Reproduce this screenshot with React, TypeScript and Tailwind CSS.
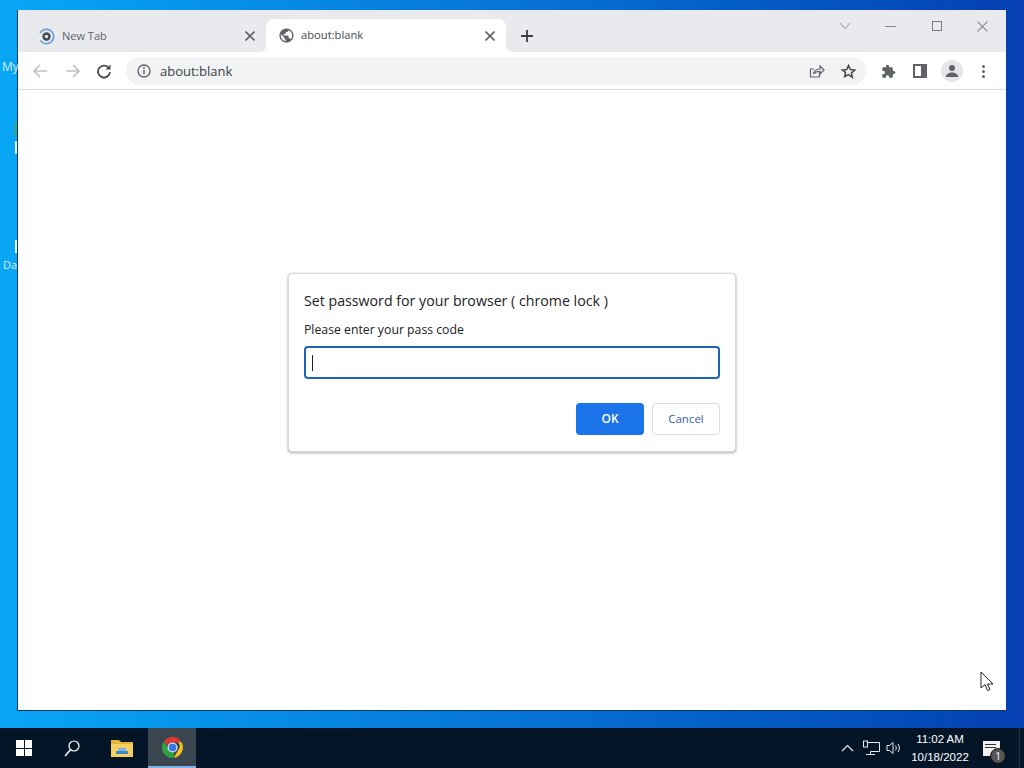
import React from "react";

const Sans = '[font-family:"Open_Sans","Noto_Sans",sans-serif]';

function ChromeLogo() {
  return (
    <svg width="25" height="25" viewBox="0 0 48 48">
      <path d="M24 4a20 20 0 0 1 17.3 10H24a10 10 0 0 0-9.3 6.3L7.9 11.8A20 20 0 0 1 24 4z" fill="#e0362c" />
      <path d="M41.3 14A20 20 0 0 1 26.5 43.8L35 29a10 10 0 0 0-.6-15z" fill="#f9c21b" />
      <path d="M7.9 11.8l8.6 14.9A10 10 0 0 0 27 33.6l-.5 10.2A20 20 0 0 1 7.9 11.8z" fill="#2f9e44" />
      <circle cx="24" cy="24" r="9.5" fill="#fff" />
      <circle cx="24" cy="24" r="7.5" fill="#3b78e7" />
    </svg>
  );
}

function X({ size = 10, color = "#5f6368", w = 1.6 }: { size?: number; color?: string; w?: number }) {
  return (
    <svg width={size} height={size} viewBox="0 0 10 10">
      <path d="M0.5 0.5l9 9M9.5 0.5l-9 9" stroke={color} strokeWidth={w} fill="none" />
    </svg>
  );
}

function TitleBar() {
  return (
    <div className="flex h-[42px] shrink-0 bg-[#e8eaed]">
      <div className="flex w-[248px] items-center pl-[20px] pr-[11px] pt-[10px]">
        <svg width="17" height="17" viewBox="0 0 18 18" className="shrink-0">
          <circle cx="9" cy="9" r="7.6" fill="none" stroke="#6ea2e0" strokeWidth="1.8" strokeDasharray="30 8" transform="rotate(-80 9 9)" />
          <circle cx="9" cy="9" r="4.4" fill="#3f4a55" />
          <circle cx="9" cy="9" r="1.9" fill="#dfe6ee" />
        </svg>
        <span className="ml-[7px] flex-1 text-[11px] text-[#5f6368]">New Tab</span>
        <X />
      </div>
      <div className="relative mt-[9px] flex h-[33px] w-[240px] items-center rounded-t-[8px] bg-white pl-[12px] pr-[11px]">
        <div className="absolute bottom-0 left-[-6px] h-[6px] w-[6px] bg-white">
          <div className="h-full w-full rounded-br-[6px] bg-[#e8eaed]" />
        </div>
        <div className="absolute bottom-0 right-[-6px] h-[6px] w-[6px] bg-white">
          <div className="h-full w-full rounded-bl-[6px] bg-[#e8eaed]" />
        </div>
        <svg width="17" height="17" viewBox="0 0 24 24" className="shrink-0">
          <path d="M12 2C6.480 2 2 6.480 2 12s4.480 10 10 10 10-4.480 10-10S17.520 2 12 2zm-1 17.930c-3.950-.49-7-3.850-7-7.930 0-.62.08-1.210.21-1.790L9 15v1c0 1.100.9 2 2 2v1.930zm6.900-2.540c-.26-.81-1-1.390-1.900-1.390h-1v-3c0-.55-.45-1-1-1H8v-2h2c.55 0 1-.45 1-1V7h2c1.100 0 2-.9 2-2v-.41c2.930 1.190 5 4.060 5 7.410 0 2.080-.8 3.970-2.100 5.390z" fill="#5f6368" />
        </svg>
        <span className="ml-[6px] flex-1 text-[11.2px] text-[#45484c]">about:blank</span>
        <X />
      </div>
      <div className="ml-[14px] flex items-center pt-[10px]">
        <svg width="14" height="14" viewBox="0 0 14 14">
          <path d="M7 1v12M1 7h12" stroke="#3c4043" strokeWidth="1.8" />
        </svg>
      </div>
      <div className="ml-auto flex w-[184px] items-start pt-[11px]">
        <div className="ml-[6px] flex w-[34px] justify-center pt-[1px]">
          <svg width="12" height="8" viewBox="0 0 12 8"><path d="M1 1l5 5.500L11 1" stroke="#b3b6ba" strokeWidth="1.200" fill="none" /></svg>
        </div>
        <div className="ml-[11px] flex h-[10px] w-[34px] items-center justify-center">
          <div className="h-px w-[11px] bg-[#83868a]" />
        </div>
        <div className="ml-[25px] flex w-[10px] justify-center">
          <div className="h-[10px] w-[10px] border border-[#7a7d80]" />
        </div>
        <div className="ml-[35px]"><X size={11} color="#85888b" w={1} /></div>
      </div>
    </div>
  );
}

function Toolbar() {
  return (
    <div className="flex h-[38px] shrink-0 items-center border-b border-[#dadce0] bg-white pt-[1px]">
      <div className="ml-[14px] flex w-[16px] justify-center">
        <svg width="16" height="16" viewBox="0 0 16 16"><path d="M15 8H2M8 2L2 8l6 6" stroke="#bdc1c6" strokeWidth="1.7" fill="none" /></svg>
      </div>
      <div className="ml-[17px] flex w-[16px] justify-center">
        <svg width="16" height="16" viewBox="0 0 16 16"><path d="M1 8h13M8 2l6 6-6 6" stroke="#bdc1c6" strokeWidth="1.7" fill="none" /></svg>
      </div>
      <div className="ml-[15px] flex w-[16px] justify-center">
        <svg width="16" height="16" viewBox="0 0 16 16">
          <path d="M13 5.200A6 6 0 1 0 14 9" stroke="#45494d" strokeWidth="1.800" fill="none" />
          <path d="M14.500 1.500v5h-5z" fill="#45494d" />
        </svg>
      </div>
      <div className="ml-[14px] flex h-[28px] w-[740px] items-center rounded-full bg-[#f1f3f4] pl-[11px]">
        <svg width="14" height="14" viewBox="0 0 14 14">
          <circle cx="7" cy="7" r="6" stroke="#5f6368" strokeWidth="1.300" fill="none" />
          <path d="M7 6v4.200" stroke="#5f6368" strokeWidth="1.400" />
          <circle cx="7" cy="4" r="0.9" fill="#5f6368" />
        </svg>
        <span className="ml-[9px] flex-1 pt-[1px] text-[13px] text-[#3c4043]">about:blank</span>
        <svg width="16" height="16" viewBox="0 0 16 16" className="mr-[16px]">
          <path d="M10.500 9.500V14H1.500V6H5" stroke="#5f6368" strokeWidth="1.200" fill="none" />
          <path d="M4.500 11c.5-3 3-5 6.500-5V3l4 4-4 4V8.300c-3 0-5 .8-6.500 2.700z" stroke="#5f6368" strokeWidth="1.200" fill="none" />
        </svg>
        <svg width="15" height="15" viewBox="0 0 24 24" className="mr-[10px]">
          <path d="M12 2.500l2.900 6.400 7 .8-5.200 4.700 1.400 6.900L12 17l-6.100 3.300 1.400-6.900L2.100 9.700l7-.8z" stroke="#45494d" strokeWidth="2.400" fill="none" />
        </svg>
      </div>
      <div className="ml-[14px] flex w-[16px] justify-center">
        <svg width="15" height="15" viewBox="0 0 24 24">
          <path d="M20.500 11H19V7a2 2 0 0 0-2-2h-4V3.500a2.500 2.500 0 0 0-5 0V5H4a2 2 0 0 0-2 2v3.800h1.500a2.700 2.700 0 0 1 0 5.400H2V20a2 2 0 0 0 2 2h3.800v-1.500a2.700 2.700 0 0 1 5.400 0V22H17a2 2 0 0 0 2-2v-4h1.500a2.500 2.500 0 0 0 0-5z" fill="#5f6368" />
        </svg>
      </div>
      <div className="ml-[17px] flex h-[14px] w-[14px] justify-end border-2 border-[#5f6368] bg-white">
        <div className="h-full w-[4px] bg-[#5f6368]" />
      </div>
      <div className="ml-[14px] flex h-[22px] w-[22px] items-center justify-center rounded-full bg-[#e3e5e8]">
        <svg width="14" height="14" viewBox="0 0 14 14">
          <circle cx="7" cy="4" r="3" fill="#5f6368" />
          <path d="M1 13c0-3 3-4.500 6-4.500s6 1.500 6 4.500z" fill="#5f6368" />
        </svg>
      </div>
      <div className="ml-[19px] flex flex-col gap-[2px]">
        <div className="h-[3px] w-[3px] rounded-full bg-[#5f6368]" />
        <div className="h-[3px] w-[3px] rounded-full bg-[#5f6368]" />
        <div className="h-[3px] w-[3px] rounded-full bg-[#5f6368]" />
      </div>
    </div>
  );
}

function Dialog() {
  return (
    <div className="ml-[270px] mt-[183px] flex h-[179px] w-[448px] flex-col rounded-[4px] border border-[#d8d8d8] bg-white px-[15px] pt-[17px] shadow-[0_1px_3px_rgba(0,0,0,0.35)]">
      <div className="whitespace-nowrap text-[14.2px] leading-[20px] text-[#202124]">Set password for your browser ( chrome lock )</div>
      <div className="mt-[10px] whitespace-nowrap text-[12.25px] leading-[18px] text-[#202124]">Please enter your pass code</div>
      <div className="mt-[7px] flex h-[33px] w-[416px] items-center rounded-[4px] border-2 border-[#1a65b8] pl-[6px]">
        <div className="h-[16px] w-px bg-[#202124]" />
      </div>
      <div className="mt-[24px] flex w-[416px] justify-end gap-[8px]">
        <div className="flex h-[32px] w-[68px] items-center justify-center rounded-[4px] bg-[#1a73e8] text-[12px] font-semibold text-white">OK</div>
        <div className="flex h-[32px] w-[68px] items-center justify-center rounded-[4px] border border-[#dadce0] bg-white text-[11.5px] text-[#3b5ea8]">Cancel</div>
      </div>
    </div>
  );
}

function Taskbar() {
  return (
    <div className="flex h-[40px] shrink-0 items-center bg-[#031526] text-white">
      <div className="ml-[16px] grid h-[16px] w-[16px] grid-cols-2 gap-[1px]">
        <div className="bg-white" /><div className="bg-white" /><div className="bg-white" /><div className="bg-white" />
      </div>
      <svg width="16" height="17" viewBox="0 0 16 17" className="ml-[32px]">
        <circle cx="10" cy="6" r="5" stroke="#fff" strokeWidth="1.200" fill="none" />
        <path d="M6.500 9.800L1 16" stroke="#fff" strokeWidth="1.500" />
      </svg>
      <svg width="22" height="18" viewBox="0 0 22 18" className="ml-[31px]">
        <path d="M0 1h8l2 2h12v3H0z" fill="#e8b53c" />
        <path d="M0 5h22v13H0z" fill="#f6cf62" />
        <path d="M5 12h12v3H5z" fill="#3f88c5" />
        <path d="M7 9h8v3H7z" fill="#7db6de" />
      </svg>
      <div className="ml-[15px] flex h-[40px] w-[48px] items-center justify-center border-b-2 border-[#7db3e6] bg-[#3a4650]">
        <ChromeLogo />
      </div>
      <div className="ml-auto flex items-center">
        <svg width="13" height="8" viewBox="0 0 13 8"><path d="M1 7l5.500-5.500L12 7" stroke="#e8eaed" strokeWidth="1.200" fill="none" /></svg>
        <svg width="17" height="16" viewBox="0 0 17 16" className="ml-[9px]">
          <path d="M4.500 2.500H16.500V11.500H7.500M7.500 11.500V14.500M3 14.500H12" stroke="#e8eaed" strokeWidth="1" fill="none" />
          <rect x="0.500" y="1" width="4" height="6" stroke="#e8eaed" fill="#031526" />
        </svg>
        <svg width="16" height="14" viewBox="0 0 16 14" className="ml-[6px]">
          <path d="M1 4.500h2.500L7 1.500v11L3.500 9.500H1z" stroke="#e8eaed" fill="none" />
          <path d="M9.500 4.500c1 1.500 1 3.500 0 5M12 3c1.800 2.500 1.800 5.500 0 8" stroke="#e8eaed" fill="none" />
        </svg>
        <div className="ml-[8px] flex w-[60px] flex-col items-center text-[11.5px] leading-[18px] [font-family:'Liberation_Sans',sans-serif]">
          <span className="whitespace-nowrap">11:02 AM</span>
          <span className="whitespace-nowrap">10/18/2022</span>
        </div>
        <div className="relative ml-[13px] mr-[19px] h-[15px] w-[17px] bg-[#f2f2f2] pl-[2px] pt-[3px]">
          <div className="h-px w-[11px] bg-[#333]" />
          <div className="mt-[2px] h-px w-[11px] bg-[#333]" />
          <div className="absolute left-[7px] top-[7px] flex h-[16px] w-[16px] items-center justify-center rounded-full border border-[#111] bg-[#555] text-[10px] leading-none text-white">1</div>
        </div>
        <div className="mr-[4px] h-[40px] w-px bg-[#24323e]" />
      </div>
    </div>
  );
}

export default function App() {
  return (
    <div className={`relative flex h-[768px] w-[1024px] flex-col overflow-hidden ${Sans}`}>
      <div className="relative flex h-[728px] shrink-0 bg-gradient-to-r from-[#09a6f6] via-[#0874d8] to-[#063fb2] pl-[17px] pt-[10px]">
        <span className="absolute left-[2px] top-[58px] text-[12px] text-[#d5f0ff]">My</span>
        <span className="absolute left-[3px] top-[257px] text-[11px] text-[#d5f0ff]">Da</span>
        <div className="absolute left-[15px] top-[141px] h-[13px] w-[2px] bg-[#e6f6ff]" />
        <div className="absolute left-[15px] top-[240px] h-[13px] w-[2px] bg-[#e6f6ff]" />
        <div className="absolute left-[14px] top-[122px] h-[14px] w-[3px] bg-[#2aa59c]" />
        <div className="flex h-[701px] w-[989px] flex-col border-b border-l border-[#0a3a5c] bg-white">
          <TitleBar />
          <Toolbar />
          <div className="flex-1">
            <Dialog />
          </div>
        </div>
        <svg width="14" height="21" viewBox="0 0 14 21" className="absolute left-[980px] top-[671px]">
          <path d="M1 1v16l4-3.500L7.500 19.500l2.500-1-2.500-5.500H13z" fill="#fff" stroke="#222" strokeWidth="1" />
        </svg>
      </div>
      <Taskbar />
    </div>
  );
}
